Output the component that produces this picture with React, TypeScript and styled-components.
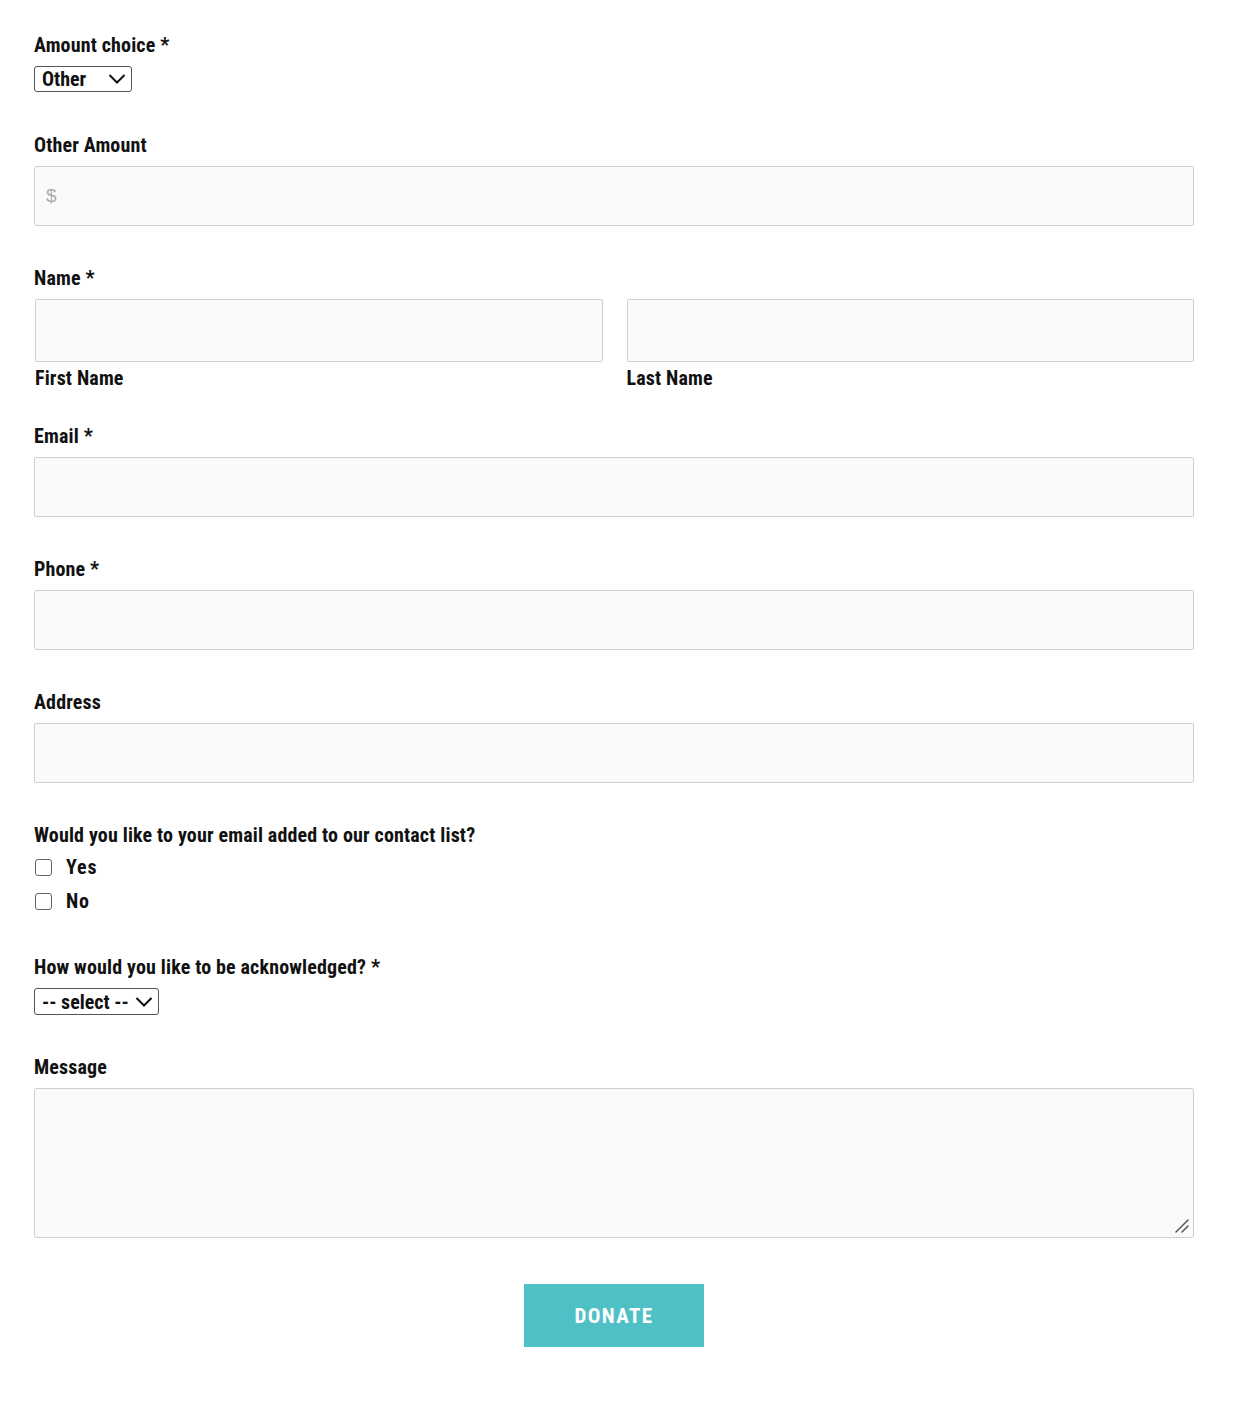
import React from "react";
import styled, { createGlobalStyle } from "styled-components";

const Global = createGlobalStyle`
  html, body { margin: 0; padding: 0; background: #fff; }
  body { font-family: Roboto, "Open Sans", sans-serif; font-stretch: condensed; color: #111; }
  * { box-sizing: border-box; }
`;

const Form = styled.form`
  display: flex;
  flex-direction: column;
  padding: 33px 40px 70px 34px;
`;

const Field = styled.div<{ $mb?: number }>`
  display: flex;
  flex-direction: column;
  margin-bottom: ${(p) => p.$mb ?? 40}px;
`;

const Label = styled.label<{ $mb?: number }>`
  display: block;
  font-family: Roboto, "Open Sans", sans-serif;
  font-stretch: condensed;
  font-weight: 700;
  font-size: 20px;
  line-height: 24px;
  letter-spacing: 0.15px;
  color: #111;
  margin-bottom: ${(p) => p.$mb ?? 9}px;
`;

const SubLabel = styled(Label)`
  margin: 4px 0 0 0;
`;

const SelectWrap = styled.div`
  position: relative;
  display: inline-flex;
  align-self: flex-start;
`;

const Select = styled.select<{ $w: number; $h: number }>`
  appearance: none;
  width: ${(p) => p.$w}px;
  height: ${(p) => p.$h}px;
  border: 1px solid #555;
  border-radius: 3px;
  background: #fff;
  font-family: Roboto, "Open Sans", sans-serif;
  font-stretch: condensed;
  font-weight: 700;
  font-size: 20px;
  letter-spacing: 0px;
  color: #111;
  padding: 0 0 0 7px;
  line-height: 24px;
`;

const Chevron = styled.svg`
  position: absolute;
  right: 6px;
  top: 50%;
  transform: translateY(-50%);
  pointer-events: none;
`;

const Input = styled.input<{ $h?: number }>`
  width: 100%;
  height: ${(p) => p.$h ?? 60}px;
  border: 1px solid #d0d0d0;
  border-radius: 2px;
  background: #fafafa;
  font-family: "Liberation Sans", Arial, sans-serif;
  font-size: 19px;
  padding: 0 11px;
  color: #333;
  &::placeholder { color: #aaa; }
`;

const NameRow = styled.div`
  display: grid;
  grid-template-columns: 1fr 1fr;
  column-gap: 24px;
  padding-left: 1px;
`;

const NameCol = styled.div`
  display: flex;
  flex-direction: column;
`;

const CheckRow = styled.label`
  display: flex;
  align-items: center;
  height: 34px;
  font-weight: 700;
  font-size: 20px;
  letter-spacing: 0.8px;
`;

const Box = styled.span`
  width: 17px;
  height: 17px;
  border: 1.5px solid #666;
  border-radius: 3px;
  margin: 0 14px 0 1px;
  background: #fff;
`;

const AreaWrap = styled.div`
  position: relative;
`;

const TextArea = styled.textarea`
  width: 100%;
  height: 150px;
  border: 1px solid #d0d0d0;
  border-radius: 2px;
  background: #fafafa;
  resize: none;
  display: block;
`;

const Grip = styled.svg`
  position: absolute;
  right: 5px;
  bottom: 5px;
  pointer-events: none;
`;

const Button = styled.button`
  align-self: center;
  width: 180px;
  height: 63px;
  border: none;
  background: #4fc1c6;
  color: #fff;
  font-family: Roboto, sans-serif;
  font-stretch: condensed;
  font-weight: 700;
  font-size: 21px;
  letter-spacing: 1.4px;
  margin-top: 6px;
`;

const ChevronIcon = () => (
  <Chevron width="18" height="11" viewBox="0 0 18 11">
    <path d="M1.5 1.5 L9 9 L16.5 1.5" fill="none" stroke="#111" strokeWidth="2" />
  </Chevron>
);

export default function App() {
  return (
    <>
      <Global />
      <Form onSubmit={(e) => e.preventDefault()}>
        <Field $mb={41}>
          <Label>Amount choice *</Label>
          <SelectWrap>
            <Select $w={98} $h={26} defaultValue="other">
              <option value="other">Other</option>
            </Select>
            <ChevronIcon />
          </SelectWrap>
        </Field>

        <Field>
          <Label>Other Amount</Label>
          <Input placeholder="$" />
        </Field>

        <Field $mb={34}>
          <Label>Name *</Label>
          <NameRow>
            <NameCol>
              <Input $h={63} />
              <SubLabel>First Name</SubLabel>
            </NameCol>
            <NameCol>
              <Input $h={63} />
              <SubLabel>Last Name</SubLabel>
            </NameCol>
          </NameRow>
        </Field>

        <Field>
          <Label>Email *</Label>
          <Input />
        </Field>

        <Field>
          <Label>Phone *</Label>
          <Input />
        </Field>

        <Field>
          <Label>Address</Label>
          <Input />
        </Field>

        <Field $mb={37}>
          <Label $mb={3}>Would you like to your email added to our contact list?</Label>
          <CheckRow>
            <Box />
            Yes
          </CheckRow>
          <CheckRow>
            <Box />
            No
          </CheckRow>
        </Field>

        <Field>
          <Label>How would you like to be acknowledged? *</Label>
          <SelectWrap>
            <Select $w={125} $h={27} defaultValue="">
              <option value="">-- select --</option>
            </Select>
            <ChevronIcon />
          </SelectWrap>
        </Field>

        <Field>
          <Label>Message</Label>
          <AreaWrap>
            <TextArea />
            <Grip width="14" height="14" viewBox="0 0 14 14">
              <path d="M1 13 L13 1 M7 13 L13 7" stroke="#555" strokeWidth="1.5" strokeLinecap="round" />
            </Grip>
          </AreaWrap>
        </Field>

        <Button type="submit">DONATE</Button>
      </Form>
    </>
  );
}
